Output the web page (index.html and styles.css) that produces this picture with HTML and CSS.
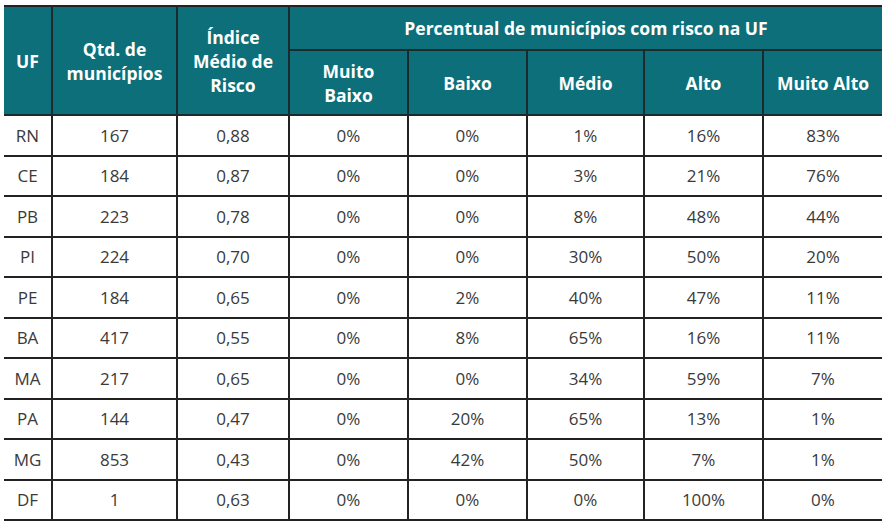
FILE: index.html
```html
<!DOCTYPE html>
<html lang="pt">
<head>
<meta charset="utf-8">
<link rel="stylesheet" href="styles.css">
</head>
<body>
<table class="risk">
  <colgroup>
    <col class="c-uf"><col class="c-qtd"><col class="c-idx">
    <col class="c-p1"><col class="c-p2"><col class="c-p3"><col class="c-p4"><col class="c-p5">
  </colgroup>
  <thead>
    <tr class="h1">
      <th rowspan="2">UF</th>
      <th rowspan="2">Qtd. de<br>municípios</th>
      <th rowspan="2">Índice<br>Médio de<br>Risco</th>
      <th colspan="5">Percentual de municípios com risco na UF</th>
    </tr>
    <tr class="h2">
      <th>Muito<br>Baixo</th>
      <th>Baixo</th>
      <th>Médio</th>
      <th>Alto</th>
      <th>Muito Alto</th>
    </tr>
  </thead>
  <tbody>
    <tr><td>RN</td><td>167</td><td>0,88</td><td>0%</td><td>0%</td><td>1%</td><td>16%</td><td>83%</td></tr>
    <tr><td>CE</td><td>184</td><td>0,87</td><td>0%</td><td>0%</td><td>3%</td><td>21%</td><td>76%</td></tr>
    <tr><td>PB</td><td>223</td><td>0,78</td><td>0%</td><td>0%</td><td>8%</td><td>48%</td><td>44%</td></tr>
    <tr><td>PI</td><td>224</td><td>0,70</td><td>0%</td><td>0%</td><td>30%</td><td>50%</td><td>20%</td></tr>
    <tr><td>PE</td><td>184</td><td>0,65</td><td>0%</td><td>2%</td><td>40%</td><td>47%</td><td>11%</td></tr>
    <tr><td>BA</td><td>417</td><td>0,55</td><td>0%</td><td>8%</td><td>65%</td><td>16%</td><td>11%</td></tr>
    <tr><td>MA</td><td>217</td><td>0,65</td><td>0%</td><td>0%</td><td>34%</td><td>59%</td><td>7%</td></tr>
    <tr><td>PA</td><td>144</td><td>0,47</td><td>0%</td><td>20%</td><td>65%</td><td>13%</td><td>1%</td></tr>
    <tr><td>MG</td><td>853</td><td>0,43</td><td>0%</td><td>42%</td><td>50%</td><td>7%</td><td>1%</td></tr>
    <tr><td>DF</td><td>1</td><td>0,63</td><td>0%</td><td>0%</td><td>0%</td><td>100%</td><td>0%</td></tr>
  </tbody>
</table>
</body>
</html>
```
FILE: styles.css
```css
html, body {
  margin: 0;
  padding: 0;
  background: #ffffff;
}

body {
  padding: 5px 0 0 4px;
  font-family: "Open Sans", "Liberation Sans", sans-serif;
}

.risk {
  border-collapse: collapse;
  table-layout: fixed;
  width: 878px;
}

.c-uf { width: 48px; }
.c-qtd { width: 125px; }
.c-idx { width: 112px; }
.c-p1 { width: 119px; }
.c-p2 { width: 119px; }
.c-p3 { width: 117px; }
.c-p4 { width: 119px; }
.c-p5 { width: 119px; }

.risk th {
  background: #0c6f79;
  color: #ffffff;
  font-weight: 700;
  font-size: 17.5px;
  line-height: 24px;
  text-align: center;
  vertical-align: middle;
  padding: 0;
  border: 2px solid #1b2a2c;
}

.risk thead tr.h1 th {
  border-top: 2px solid #222222;
}

.risk thead tr.h1 th:first-child,
.risk thead tr.h2 th:first-child { border-left: none; }

.risk thead tr.h1 th:last-child,
.risk thead tr.h2 th:last-child { border-right: none; }

.risk tr.h1 { height: 44px; }
.risk tr.h2 { height: 65px; }

.risk td {
  height: 38.5px;
  padding: 0;
  text-align: center;
  vertical-align: middle;
  font-size: 17px;
  color: #3a3a3a;
  border: 2px solid #222222;
  border-top: none;
}

.risk td:first-child { border-left: none; }
.risk td:last-child { border-right: none; }
```
